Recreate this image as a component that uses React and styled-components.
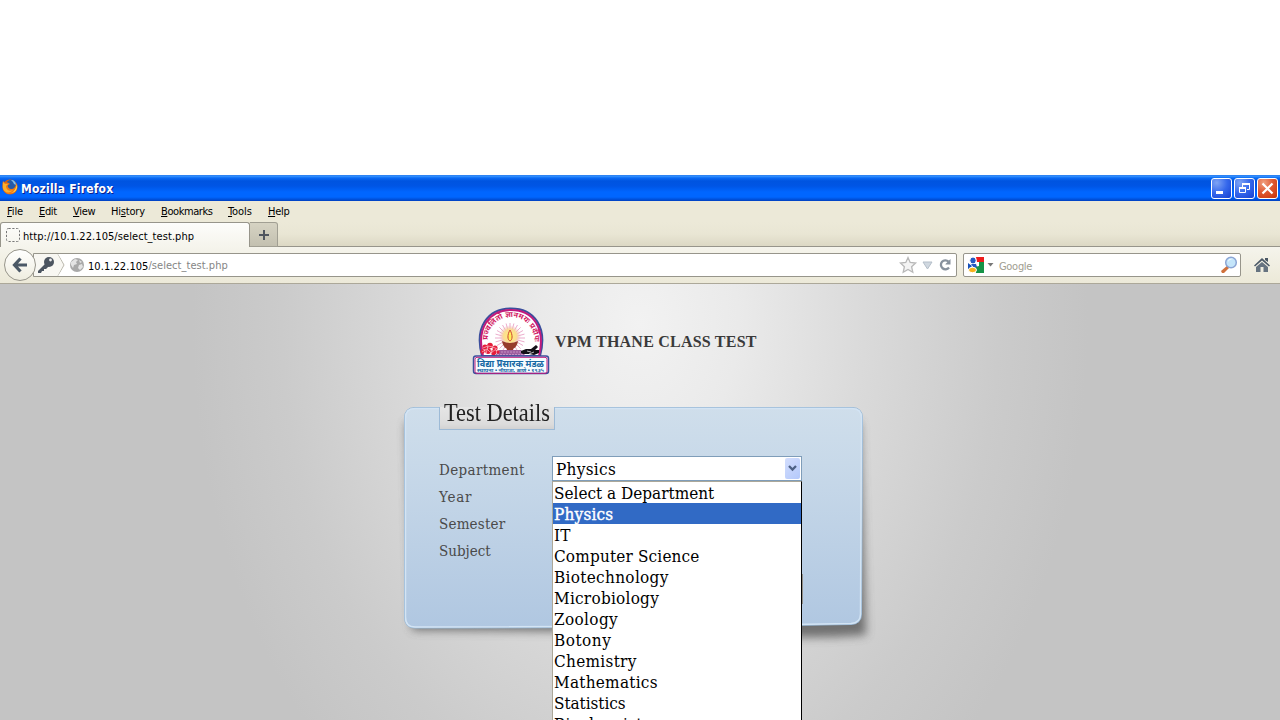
import React from 'react';
import styled, { createGlobalStyle } from 'styled-components';

const Global = createGlobalStyle`
  * { box-sizing: border-box; }
  body { margin: 0; background: #fff; overflow: hidden; }
`;

const ui = `"DejaVu Sans Condensed", "DejaVu Sans", sans-serif`;
const serif = `"DejaVu Serif Condensed", "DejaVu Serif", serif`;

const Screen = styled.div`
  width: 1280px;
  height: 720px;
  padding-top: 175px;
  display: flex;
  flex-direction: column;
  overflow: hidden;
  font-family: ${ui};
  font-size: 11px;
  color: #000;
`;

const Text = styled.span`
  letter-spacing: ${(p) => p.$ls || 0}px;
  white-space: pre;
  line-height: 1;
`;

const TitleBar = styled.header`
  flex: none;
  height: 26px;
  display: flex;
  align-items: center;
  padding: 0 2px 0 2px;
  background: linear-gradient(#1f6fe8 0, #3b97ff 1px, #0a6af5 3px, #0054e0 6px, #0055e5 11px, #0066ff 17px, #0066ff 22px, #0054e0 24px, #0040c0 26px);
  > svg { margin-bottom: 2px; }
`;

const Title = styled.h1`
  margin: 1px auto 0 3px;
  font: bold 12px/1 ${ui};
  letter-spacing: ${(p) => p.$ls}px;
  color: #fff;
  text-shadow: 1px 1px 0 #0a1e8c;
`;

const WindowButtons = styled.div`
  display: flex;
  gap: 2px;
`;

const WindowButton = styled.div`
  width: 21px;
  height: 21px;
  border: 1px solid #fff;
  border-radius: 3px;
  background: ${(p) => (p.$close
    ? 'radial-gradient(circle at 30% 20%, #f0a080 0, #e05a34 45%, #c83208 100%)'
    : 'radial-gradient(circle at 25% 20%, #7fa4f4 0, #3568ec 50%, #1640d0 100%)')};
  svg { display: block; }
`;

const MenuBar = styled.nav`
  flex: none;
  height: 21px;
  display: flex;
  align-items: center;
  background: #ece9d8;
  padding-left: 7px;
`;

const MenuItem = styled.span`
  width: ${(p) => p.$w}px;
  line-height: 12px;
  letter-spacing: ${(p) => p.$ls}px;
  white-space: nowrap;
  &::first-letter { text-decoration: ${(p) => (p.$plain ? 'none' : 'underline')}; }
`;

const TabStrip = styled.div`
  flex: none;
  height: 25px;
  display: flex;
  background: linear-gradient(#ece9d8 0, #e9e6d4 12px, #dcd8c4 24px);
  border-bottom: 1px solid #97958b;
`;

const Tab = styled.div`
  width: 250px;
  height: 25px;
  display: flex;
  align-items: center;
  gap: 3px;
  padding: 2px 0 0 5px;
  border: 1px solid #97958b;
  border-bottom: 0;
  border-radius: 3px 3px 0 0;
  background: linear-gradient(#fdfdfb, #f5f4ec);
  svg { margin-bottom: 2px; }
`;

const NewTab = styled.div`
  width: 28px;
  height: 25px;
  display: flex;
  align-items: center;
  justify-content: center;
  border: 1px solid #a19f93;
  border-left: 0;
  border-radius: 0 3px 0 0;
  background: linear-gradient(#d6d3c3, #c3c0b0);
`;

const NavBar = styled.div`
  flex: none;
  height: 37px;
  display: flex;
  align-items: center;
  padding: 0 10px 0 4px;
  background: linear-gradient(#f5f4ec, #ece9d8);
  border-bottom: 1px solid #aca899;
`;

const BackButton = styled.div`
  z-index: 1;
  width: 32px;
  height: 32px;
  flex: none;
  display: flex;
  align-items: center;
  justify-content: center;
  border: 1px solid #97958b;
  border-radius: 50%;
  background: linear-gradient(#fff, #efeddf);
`;

const UrlBar = styled.div`
  flex: none;
  width: 924px;
  height: 24px;
  margin-left: -3px;
  display: flex;
  align-items: center;
  border: 1px solid #97958b;
  border-radius: 0 2px 2px 0;
  background: #fff;
  svg { flex: none; }
`;

const Identity = styled.div`
  width: 31px;
  height: 22px;
  background: #f8f7f2;
  clip-path: polygon(0 0, 24px 0, 31px 50%, 24px 100%, 0 100%);
`;

const Globe = styled.svg`
  margin-left: 4px;
`;

const UrlText = styled.div`
  margin: 0 auto 0 3px;
  padding-top: 3px;
  display: flex;
  color: #858585;
  b { font-weight: normal; color: #000; }
`;

const SearchBox = styled.div`
  width: 278px;
  height: 24px;
  margin: 0 auto 0 6px;
  display: flex;
  align-items: center;
  padding: 0 2px 0 4px;
  border: 1px solid #97958b;
  border-radius: 2px;
  background: #fff;
`;

const EngineArrow = styled.svg`
  margin-left: 3px;
`;

const Hint = styled.div`
  margin: 3px auto 0 5px;
  color: #a09d90;
`;

const Page = styled.main`
  flex: 1;
  display: flex;
  flex-direction: column;
  align-items: flex-start;
  background: radial-gradient(ellipse 448px 600px at 640px 40px, #f2f2f2 0, #eaeaea 22%, #dadada 50%, #cbcbcb 80%, #c4c4c4 100%);
`;

const Brand = styled.div`
  display: flex;
  align-items: flex-start;
  height: 123px;
  padding: 21px 0 0 471px;
`;

const BrandName = styled.h2`
  margin: 28px 0 0 5px;
  font: bold 16px/18px "Liberation Serif", serif;
  letter-spacing: ${(p) => p.$ls}px;
  white-space: nowrap;
  color: #3a3a3a;
`;

const Card = styled.section`
  position: relative;
  width: 459px;
  height: 222px;
  margin-left: 404px;
  padding-left: 35px;
`;

const CardShape = styled.svg`
  position: absolute;
  left: -20px;
  top: -20px;
  z-index: 0;
`;

const Legend = styled.div`
  position: relative;
  width: 116px;
  height: 30px;
  margin-top: -7px;
  padding: 0 0 0 5px;
  font: 26px/26px "Liberation Serif", serif;
  color: #222;
  background: linear-gradient(transparent 7px, #e6e6e6 7px, #dcdcdc 24px, #d2d2d2 100%);
  border-bottom: 1px solid #9dbad6;
  white-space: nowrap;
  &::before {
    content: '';
    position: absolute;
    inset: 7px 0 0;
    border: solid #9dbad6;
    border-width: 0 1px;
  }
  span { display: inline-block; transform-origin: 0 50%; transform: scaleX(${(p) => p.$sx}); }
`;

const Fields = styled.div`
  position: relative;
  display: flex;
  margin-top: 26px;
`;

const Labels = styled.div`
  width: 113px;
  padding-top: 1px;
  font: 15px/27px ${serif};
  color: #4a4a4a;
`;

const Label = styled.div`
  height: 27px;
  letter-spacing: ${(p) => p.$ls}px;
`;

const Select = styled.div`
  width: 250px;
  font: 17px/21px ${serif};
  color: #000;
`;

const SelectBox = styled.div`
  height: 25px;
  display: flex;
  align-items: center;
  justify-content: space-between;
  padding: 0 1px 0 3px;
  border: 1px solid #7f9db9;
  background: #fff;
  > span { padding-top: 2px; }
`;

const Arrow = styled.div`
  width: 15px;
  height: 21px;
  display: flex;
  align-items: center;
  justify-content: center;
  border-radius: 2px;
  background: linear-gradient(135deg, #d3defd, #b3c8fb);
`;

const Options = styled.div`
  height: 260px;
  border: solid #aca899;
  border-width: 1px 1px 0 1px;
  border-right-color: #000;
  background: #fff;
  overflow: hidden;
`;

const Option = styled.div`
  height: 21px;
  padding: 1px 0 0 1px;
  letter-spacing: ${(p) => p.$ls}px;
  white-space: nowrap;
  color: ${(p) => (p.$on ? '#fff' : '#000')};
  background: ${(p) => (p.$on ? '#316ac5' : 'transparent')};
  -webkit-text-stroke: ${(p) => (p.$on ? '0.4px #fff' : '0')};
`;

const HiddenButtonEdge = styled.div`
  width: 1px;
  height: 30px;
  margin-top: 118px;
  background: #928f88;
`;

const menu = [
  ['File', 32, -0.1], ['Edit', 34, -0.35], ['View', 38, -0.25], ['History', 50, -0.2, 1],
  ['Bookmarks', 67, -0.42], ['Tools', 40, -0.1], ['Help', 30, -0.3],
];
const labels = [['Department', 0.35], ['Year', 0.8], ['Semester', 0.2], ['Subject', 0]];
const options = [
  ['Select a Department', 0], ['Physics', 0.2], ['IT', 0.2], ['Computer Science', 0.17],
  ['Biotechnology', 0.32], ['Microbiology', 0.25], ['Zoology', 0.35], ['Botony', 0.5],
  ['Chemistry', 0.3], ['Mathematics', 0.26], ['Statistics', -0.05], ['Biochemistry', 0.25],
];

const Firefox = () => (
  <svg width="16" height="16" viewBox="0 0 16 16">
    <circle cx="8" cy="8" r="7.5" fill="#d9600c" />
    <circle cx="9" cy="6" r="5" fill="#245aa8" />
    <path d="M9 1c3 0 5 2 5 5l-2-1-1-2z" fill="#7fc0ee" />
    <path d="M1 2l2 2c2-1 4 0 5 1L6 6c-1 2 1 4 3 4 3 0 5-2 5-6 3 5 0 11-6 11C2 15-1 9 1 2z" fill="#f07a14" />
    <path d="M1 3l2 2 3 0-2 2c0 4 4 6 7 4-3 4-9 3-10-2z" fill="#fbb02c" />
    <path d="M15 5c1 5-2 9-6 9 3-1 5-4 6-9z" fill="#ffd84a" />
  </svg>
);

const Emblem = () => (
  <svg width="79" height="70" viewBox="0 0 79 70">
    <defs>
      <path id="motto" d="M16.500 36A23.500 24 0 1 1 63.500 36" />
      <radialGradient id="glow">
        <stop offset="0" stopColor="#fff27a" />
        <stop offset=".6" stopColor="#fbdc92" />
        <stop offset="1" stopColor="#ecaec5" stopOpacity="0" />
      </radialGradient>
    </defs>
    <path d="M11 51C3 22 17 3.500 40 3.500s37 18.500 29 47.500z" fill="#fff" stroke="#3b4e9c" strokeWidth="2" />
    <path d="M12 51C5 23 18 5 40 5s35 18 28 46" fill="none" stroke="#c01a7c" strokeWidth="2" />
    <g stroke="#e9a3c6" strokeWidth=".9">
      {Array.from({ length: 24 }, (_, i) => {
        const a = (i * Math.PI) / 12;
        return <line key={i} x1="39" y1="33" x2={39 + 15 * Math.cos(a)} y2={33 + 15 * Math.sin(a)} />;
      })}
    </g>
    <circle cx="39" cy="31" r="11" fill="url(#glow)" />
    <path d="M39 25c3 5 2.500 10 0 11-2.500-1-3-6 0-11z" fill="#fff05a" stroke="#cf4238" strokeWidth="1" />
    <path d="M31 36q8 4 16 0-1 6-5 8v2h-6v-2q-4-2-5-8z" fill="#963c2c" />
    <path d="M28 45h22l5 6H24z" fill="#9d5d9e" />
    <path d="M27 47h25M26 49.500h28" stroke="#d5a7cf" strokeWidth=".7" strokeDasharray="2 1" />
    <g fill="#e51c3b">
      <circle cx="14" cy="42" r="2.600" /><circle cx="19" cy="40.500" r="2.800" /><circle cx="24" cy="43" r="2.600" />
      <circle cx="11.500" cy="46.500" r="2.200" /><circle cx="17" cy="46" r="2.900" /><circle cx="22.500" cy="47.500" r="2.700" /><circle cx="27" cy="47" r="1.700" />
    </g>
    <path d="M12 43l5-2 5 1 4 2M11 47l5-3 4 4 5-4M15 49l2-8M20 49l2-7" stroke="#f9c3cb" strokeWidth=".7" fill="none" />
    <path d="M50 46l5-2 5 0 5-4 2 2-3 3 4 0v3l-5 2-5-1-6 0-2-1z" fill="#141018" />
    <path d="M56 46l4 1M58 49l5-2" stroke="#fff" strokeWidth=".7" />
    <text fill="#d21a63" fontFamily="Noto Sans, sans-serif" fontWeight="bold" fontSize="7.500">
      <textPath href="#motto" startOffset="1" textLength="74" lengthAdjust="spacingAndGlyphs">प्रज्वलितो ज्ञानमयः प्रदीपः</textPath>
    </text>
    <rect x="2.500" y="51" width="75" height="17.500" rx="2.500" fill="#f5fcff" stroke="#3b4e9c" strokeWidth="1.500" />
    <rect x="4" y="52.300" width="72" height="16" rx="2" fill="none" stroke="#c01a7c" strokeWidth="1" />
    <text x="6" y="61.500" textLength="67" lengthAdjust="spacingAndGlyphs" fill="#1768a4" fontFamily="Noto Sans, sans-serif" fontWeight="bold" fontSize="10">विद्या प्रसारक मंडळ</text>
    <text x="6" y="67" textLength="67" lengthAdjust="spacingAndGlyphs" fill="#1768a4" fontFamily="Noto Sans, sans-serif" fontWeight="bold" fontSize="5">स्थापना • नौपाडा, ठाणे • १९३५</text>
  </svg>
);

export default function App() {
  return (
    <Screen>
      <Global />
      <TitleBar>
        <Firefox />
        <Title $ls={0.2}>Mozilla Firefox</Title>
        <WindowButtons>
          <WindowButton><svg width="19" height="19"><path d="M4 12h7v3H4z" fill="#fff" /></svg></WindowButton>
          <WindowButton>
            <svg width="19" height="19" fill="none" stroke="#fff"><path d="M7.500 8V4.500h7v6H12M4.500 8.500h6v5h-6z" /><path d="M7 5h8M4 9h7" strokeWidth="2" /></svg>
          </WindowButton>
          <WindowButton $close><svg width="19" height="19" stroke="#fff" strokeWidth="2.200"><path d="M4.500 4.500l10 10M14.500 4.500l-10 10" /></svg></WindowButton>
        </WindowButtons>
      </TitleBar>
      <MenuBar>
        {menu.map(([name, w, ls, plain]) => (
          <MenuItem key={name} $w={w} $ls={ls} $plain={plain}>
            {plain ? <>Hi<u>s</u>tory</> : name}
          </MenuItem>
        ))}
      </MenuBar>
      <TabStrip>
        <Tab>
          <svg width="14" height="14"><rect x=".5" y=".5" width="13" height="13" rx="2" fill="none" stroke="#777" strokeDasharray="2.200 1.600" /></svg>
          <Text $ls={0.07}>http://10.1.22.105/select_test.php</Text>
        </Tab>
        <NewTab><svg width="12" height="12"><path d="M6 1v10M1 6h10" stroke="#50565f" strokeWidth="2" /></svg></NewTab>
      </TabStrip>
      <NavBar>
        <BackButton>
          <svg width="18" height="18" fill="none" stroke="#4b5866" strokeWidth="3.200"><path d="M9.500 2.500L3.500 9l6 6.500M3.500 9H16" /></svg>
        </BackButton>
        <UrlBar>
          <Identity>
            <svg width="31" height="22">
              <path d="M24 0l6 11-6 11" fill="none" stroke="#b9b7ad" />
              <circle cx="15" cy="8" r="5" fill="#4c5560" />
              <path d="M12 9L4 17v2h3l1-2h2v-2h2l3-3z" fill="#4c5560" />
              <circle cx="16.500" cy="6" r="1.400" fill="#eee" />
            </svg>
          </Identity>
          <Globe width="16" height="16">
            <circle cx="8" cy="8" r="7" fill="#a9a9a9" />
            <path d="M2 5l4-3 3 1-2 2 1 2-3 1-1 3-2-3zM10 8l3-1 1 3-3 3-2-2zM10 3l3 2-2 1z" fill="#e3e3e3" />
          </Globe>
          <UrlText><b><Text $ls={0.06}>10.1.22.105</Text></b><Text $ls={0.04}>/select_test.php</Text></UrlText>
          <svg width="57" height="20" viewBox="0 0 57 20">
            <path d="M9 2.500l2.200 5 5.400.5-4 3.700 1.200 5.500L9 14.400l-4.800 2.800 1.200-5.500-4-3.700 5.400-.5z" fill="#f4f4f4" stroke="#b8b8b8" strokeWidth="1.300" />
            <path d="M24 7h9l-4.500 7z" fill="#d0d8e0" stroke="#b4bec9" />
            <path d="M49.500 6.500A4.500 4.500 0 1 0 50 12.500" fill="none" stroke="#87919d" strokeWidth="2.300" />
            <path d="M46.500 9.500V9l5-5v5.500z" fill="#87919d" />
          </svg>
        </UrlBar>
        <SearchBox>
          <svg width="16" height="16">
            <rect width="16" height="16" rx="2" fill="#fff" />
            <path d="M8 0h8v5H9z" fill="#ee1c1c" />
            <path d="M7 10l4-1V5h5v11H8z" fill="#159347" />
            <path d="M0 6l4 3-3 3H0z" fill="#1550b8" />
            <ellipse cx="5" cy="3.500" rx="3.200" ry="3.500" fill="#2459c2" stroke="#fff" />
            <path d="M3 7l5 0 1 3-3 1z" fill="#2459c2" />
            <ellipse cx="4.500" cy="13" rx="4" ry="2.700" fill="#f6b21b" stroke="#fff" />
          </svg>
          <EngineArrow width="7" height="4"><path d="M.5 0h6L3.500 3.500z" fill="#777" /></EngineArrow>
          <Hint><Text $ls={-0.3}>Google</Text></Hint>
          <svg width="18" height="18">
            <path d="M8 9l-7 6 1 2 2 0 6-6z" fill="#d0713c" />
            <circle cx="11" cy="6.500" r="5.300" fill="#c4e5fa" stroke="#8ba5d4" strokeWidth="1.500" />
            <path d="M8 6c0-3 3-4 5-3-2 0-4 1-5 3z" fill="#fff" />
          </svg>
        </SearchBox>
        <svg width="16" height="16"><path d="M8 1l8 7.500-1 1L8 3.500 1 9.500l-1-1zM11 1h3v4l-3-2z" fill="#4b5866" /><path d="M8 5l6 5v5H9.500v-5h-3v5H2v-5z" fill="#667380" /></svg>
      </NavBar>
      <Page>
        <Brand>
          <Emblem />
          <BrandName $ls={0.22}>VPM THANE CLASS TEST</BrandName>
        </Brand>
        <Card>
          <CardShape width="500" height="270" viewBox="-20 -20 500 270">
            <defs>
              <linearGradient id="card" x2="0" y2="1"><stop stopColor="#cfdeeb" /><stop offset=".25" stopColor="#c8d9e9" /><stop offset="1" stopColor="#b0c7e1" /></linearGradient>
              <filter id="soft" x="-20%" y="-20%" width="140%" height="140%"><feGaussianBlur stdDeviation="5" /></filter>
            </defs>
            <path d="M2 15h454l6 213q-70 6-150-2L8 223z" fill="#505050" opacity=".75" filter="url(#soft)" />
            <path d="M11 .5H448Q458.500 .5 458.500 11L457.500 207Q457.500 217 447 217.500Q250 221 11 221 .5 221 .5 210V11Q.5 .5 11 .5z" fill="url(#card)" stroke="#98b8d6" />
            <path d="M11 1.500H448Q457.500 1.500 457.500 11L456.500 207Q456.500 216 447 216.500Q250 220 11 220 1.500 220 1.500 210V11Q1.500 1.500 11 1.500z" fill="none" stroke="#d3e4f4" strokeWidth="1.500" />
          </CardShape>
          <Legend $sx={0.86}><span>Test Details</span></Legend>
          <Fields>
            <Labels>
              {labels.map(([l, ls]) => <Label key={l} $ls={ls}>{l}</Label>)}
            </Labels>
            <Select>
              <SelectBox>
                <Text $ls={0.3}>Physics</Text>
                <Arrow><svg width="9" height="7"><path d="M1 1l3.500 3.500L8 1" fill="none" stroke="#4d6185" strokeWidth="2.300" /></svg></Arrow>
              </SelectBox>
              <Options>
                {options.map(([o, ls], i) => <Option key={o} $on={i === 1} $ls={ls}>{o}</Option>)}
              </Options>
            </Select>
            <HiddenButtonEdge />
          </Fields>
        </Card>
      </Page>
    </Screen>
  );
}
